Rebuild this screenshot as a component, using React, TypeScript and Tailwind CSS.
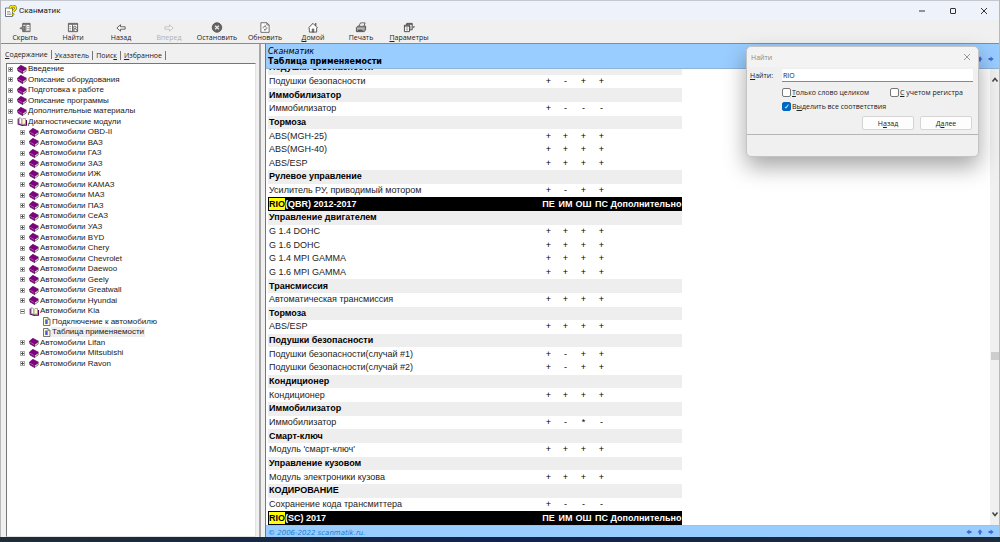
import { useState, type ReactNode } from 'react';

type Tool = { id: string; label: ReactNode; icon: ReactNode; disabled?: boolean };

const tools: Tool[] = [
  {
    id: 'hide',
    label: 'Скрыть',
    icon: (
      <>
        <path d="M4 1.500h8v9H4z" fill="#fff" stroke="#555" />
        <path d="M4 2.500h8M7.500 3v7" stroke="#555" />
        <path d="M9 5h2M9 7h2M9 9h2" stroke="#888" strokeWidth=".8" />
        <path d="M6.500 4.500v5L4.500 9.500V8L.8 7l3.700-2.500z" fill="#888" stroke="#444" strokeWidth=".6" />
      </>
    ),
  },
  {
    id: 'find',
    label: 'Найти',
    icon: (
      <>
        <path d="M1.500 1.500h10v9h-10z" fill="#fff" stroke="#555" />
        <path d="M1.500 2.500h10M6 3v7" stroke="#555" />
        <path d="M2.500 5h2M2.500 7h2M2.500 9h2" stroke="#777" strokeWidth=".8" />
        <circle cx="8.500" cy="6" r="1.500" fill="#ddd" stroke="#444" strokeWidth=".8" />
        <path d="m9.500 7.500 1.500 2M7.500 7.500v2.500" stroke="#444" />
      </>
    ),
  },
  { id: 'back', label: 'Назад', icon: <path d="M2 6.500 6 3V5.200h5v2.600H6V10z" fill="#fff" stroke="#444" strokeWidth=".9" /> },
  {
    id: 'forward',
    label: 'Вперед',
    disabled: true,
    icon: <path d="M11 6.500 7 3V5.200H2v2.600h5V10z" fill="#f4f4f4" stroke="#bbb" strokeWidth=".9" />,
  },
  {
    id: 'stop',
    label: 'Остановить',
    icon: (
      <>
        <circle cx="6.500" cy="6" r="5.200" fill="#666" stroke="#444" strokeWidth=".8" />
        <path d="m4.500 4 4 4m0-4-4 4" stroke="#e8e8e8" strokeWidth="1.500" />
      </>
    ),
  },
  {
    id: 'refresh',
    label: 'Обновить',
    icon: (
      <>
        <path d="M2 .8h6.500l2.500 2.500v8h-9z" fill="#fff" stroke="#555" strokeWidth=".9" />
        <path d="M8.500.8v2.500H11" stroke="#555" strokeWidth=".8" />
        <path d="M4.500 7V5.500L7 4.500M6 3.500l1.500 1L6.500 6M8.500 5.500V7.500L6 8.500M7 7.500l-1.500 1 1.500 1" stroke="#555" strokeWidth=".7" />
      </>
    ),
  },
  {
    id: 'home',
    label: <><u>Д</u>омой</>,
    icon: (
      <>
        <path d="M2.500 6v5h8V5.500" fill="#fff" stroke="#444" strokeWidth=".9" />
        <path d="M1.500 6.500 6.500 1.500l5 5" fill="#fff" stroke="#444" />
        <path d="M9.500 1v3" stroke="#444" strokeWidth="1.200" />
        <path d="M5.500 7.500h2V11h-2z" fill="#777" stroke="#444" strokeWidth=".5" />
      </>
    ),
  },
  {
    id: 'print',
    label: 'Печать',
    icon: (
      <>
        <path d="M4 5 6 1h5L9.500 5" fill="#fff" stroke="#444" strokeWidth=".9" />
        <path d="M1.500 6 3 4.500h8.500v4L10 10.500H1.500z" fill="#999" stroke="#444" strokeWidth=".9" />
        <path d="M2 7.500h7.500M6.500 2.500h3M6 3.800h3" stroke="#ddd" strokeWidth=".8" />
        <path d="M3 9h5" stroke="#333" />
      </>
    ),
  },
  {
    id: 'options',
    label: <><u>П</u>араметры</>,
    icon: (
      <>
        <path d="M4 1.500h6v7H4z" fill="#fff" stroke="#444" />
        <path d="M4 2.500h6" stroke="#444" />
        <path d="M1.500 3.500h5.500v7H1.500z" fill="#fff" stroke="#444" />
        <path d="M1.500 4.500h5.500" stroke="#444" />
        <path d="M3 6.500h2.500M3 8.500h2.500M8.500 4v4" stroke="#666" strokeWidth=".8" />
        <path d="M10.500 5h2.500l-1.250 1.500z" fill="#222" />
      </>
    ),
  },
];

type Node = { name: string; depth: number; kind: 'book' | 'open' | 'page' };

const makes = (names: string[]): Node[] =>
  names.map((n) => ({ name: `Автомобили ${n}`, depth: 1, kind: 'book' }));

const tree: Node[] = [
  { name: 'Введение', depth: 0, kind: 'book' },
  { name: 'Описание оборудования', depth: 0, kind: 'book' },
  { name: 'Подготовка к работе', depth: 0, kind: 'book' },
  { name: 'Описание программы', depth: 0, kind: 'book' },
  { name: 'Дополнительные материалы', depth: 0, kind: 'book' },
  { name: 'Диагностические модули', depth: 0, kind: 'open' },
  ...makes([
    'OBD-II', 'ВАЗ', 'ГАЗ', 'ЗАЗ', 'ИЖ', 'КАМАЗ', 'МАЗ', 'ПАЗ', 'СеАЗ', 'УАЗ', 'BYD',
    'Chery', 'Chevrolet', 'Daewoo', 'Geely', 'Greatwall', 'Hyundai',
  ]),
  { name: 'Автомобили Kia', depth: 1, kind: 'open' },
  { name: 'Подключение к автомобилю', depth: 2, kind: 'page' },
  { name: 'Таблица применяемости', depth: 2, kind: 'page' },
  ...makes(['Lifan', 'Mitsubishi', 'Ravon']),
];

// A row without marks is a section heading; `model` rows carry the column titles.
type Row = { name: string; marks?: string; model?: boolean };

const rows: Row[] = [
  { name: 'Подушки безопасности' },
  { name: 'Подушки безопасности', marks: '+-++' },
  { name: 'Иммобилизатор' },
  { name: 'Иммобилизатор', marks: '+---' },
  { name: 'Тормоза' },
  { name: 'ABS(MGH-25)', marks: '++++' },
  { name: 'ABS(MGH-40)', marks: '++++' },
  { name: 'ABS/ESP', marks: '++++' },
  { name: 'Рулевое управление' },
  { name: 'Усилитель РУ, приводимый мотором', marks: '+-++' },
  { name: '(QBR) 2012-2017', model: true },
  { name: 'Управление двигателем' },
  { name: 'G 1.4 DOHC', marks: '++++' },
  { name: 'G 1.6 DOHC', marks: '++++' },
  { name: 'G 1.4 MPI GAMMA', marks: '++++' },
  { name: 'G 1.6 MPI GAMMA', marks: '++++' },
  { name: 'Трансмиссия' },
  { name: 'Автоматическая трансмиссия', marks: '++++' },
  { name: 'Тормоза' },
  { name: 'ABS/ESP', marks: '++++' },
  { name: 'Подушки безопасности' },
  { name: 'Подушки безопасности(случай #1)', marks: '+-++' },
  { name: 'Подушки безопасности(случай #2)', marks: '+-++' },
  { name: 'Кондиционер' },
  { name: 'Кондиционер', marks: '++++' },
  { name: 'Иммобилизатор' },
  { name: 'Иммобилизатор', marks: '+-*-' },
  { name: 'Смарт-ключ' },
  { name: "Модуль 'смарт-ключ'", marks: '++++' },
  { name: 'Управление кузовом' },
  { name: 'Модуль электроники кузова', marks: '++++' },
  { name: 'КОДИРОВАНИЕ' },
  { name: 'Сохранение кода трансмиттера', marks: '+---' },
  { name: '(SC) 2017', model: true },
];

function TreeIcon({ kind }: { kind: Node['kind'] }) {
  if (kind === 'page') {
    return (
      <svg viewBox="0 0 9 9" className="h-[9px] w-[9px] shrink-0" fill="none">
        <path d="M1.500.5h4.500l2 2v6h-6.500z" fill="#fffbd0" stroke="#555" strokeWidth=".8" />
        <path d="M3.200 2.500h2.500v4.500H3.200z" fill="#4a5fd8" />
        <path d="M6 .5v2h2" stroke="#555" strokeWidth=".6" />
      </svg>
    );
  }
  if (kind === 'open') {
    return (
      <svg viewBox="0 0 10 9" className="h-[9px] w-2.5 shrink-0" fill="none">
        <path d="M1.200 1.500v5.700l3.300.9 1 .5 1-.5h3V3" stroke="#600060" strokeWidth="1.100" />
        <path d="M2.200.8c1.500 0 2.300.7 2.800 1.700v5.500C4.500 7 3.500 6.800 2.200 6.800z" fill="#fff" stroke="#555" strokeWidth=".6" />
        <path d="M5 2.500c.6-1 2-1.200 3.500-1v5.600C7 7 5.600 7.200 5 8z" fill="#fffbc0" stroke="#666" strokeWidth=".6" />
      </svg>
    );
  }
  return (
    <svg viewBox="0 0 10 9" className="h-[9px] w-2.5 shrink-0" fill="none">
      <path d="M5.200 6.600 9.200 4v2L5.500 8.400z" fill="#e8e8e8" stroke="#333" strokeWidth=".6" />
      <path d="M.4 3.200 3.800.3 9.500 3.200 5.500 6.400V8.600L1 6z" fill="#800080" stroke="#500050" strokeWidth=".6" />
      <path d="M1 4.200 5.300 6.600" stroke="#d8a8d8" strokeWidth=".5" />
    </svg>
  );
}

function Expander({ open }: { open: boolean }) {
  return (
    <svg viewBox="0 0 5 5" className="h-[5px] w-[5px] shrink-0" shapeRendering="crispEdges">
      <path d="M0 0h5v5H0z" fill="#aaa" />
      <path d="M1 1h3v3H1z" fill="#fff" />
      <path d={open ? 'M1 2h3v1H1z' : 'M1 2h3v1H1zM2 1h1v3H2z'} fill="#555" />
    </svg>
  );
}

function NavArrow({ label, turn }: { label: string; turn: string }) {
  return (
    <a href="#" aria-label={label}>
      <svg viewBox="0 0 6 6" className={`h-1.5 w-1.5 ${turn}`}>
        <path d="M.5 2h2V.5L5.700 3 2.500 5.500V4h-2z" fill="#4468d4" />
      </svg>
    </a>
  );
}

function NavArrows() {
  return (
    <nav className="flex gap-[5px] pr-[5px]">
      <NavArrow label="Предыдущая" turn="rotate-180" />
      <NavArrow label="Вверх" turn="-rotate-90" />
      <NavArrow label="Следующая" turn="rotate-0" />
    </nav>
  );
}

function TitleBar() {
  return (
    <header className="flex h-5 shrink-0 items-center border-t border-[#c5c8cf] bg-[#eef3fb] pl-1">
      <svg viewBox="0 0 12 12" className="h-3 w-3" fill="none">
        <path d="M.5 3h7v8.500h-7z" fill="#fff" stroke="#555" strokeWidth=".8" />
        <path d="M2 6.500h3M2 8h4M2 9.500h4" stroke="#888" strokeWidth=".7" />
        <path d="M5 3.500C5 1.500 6.500 1 7.800 1c1.600 0 2.700.8 2.700 2.200C10.500 5 8 5 8 7" stroke="#554d00" strokeWidth="2.600" />
        <path d="M5 3.500C5 1.500 6.500 1 7.800 1c1.600 0 2.700.8 2.700 2.200C10.500 5 8 5 8 7" stroke="#ffee00" strokeWidth="1.600" />
        <circle cx="8" cy="9.300" r="1.100" fill="#ffee00" stroke="#554d00" strokeWidth=".5" />
      </svg>
      <h1 className="ml-0.5 flex-1 font-['Roboto',sans-serif] text-[8px] text-[#222]">Сканматик</h1>
      <div className="flex">
        <button aria-label="Свернуть" className="flex w-[31px] justify-center">
          <svg viewBox="0 0 8 8" className="h-2 w-2" stroke="#333"><path d="M1 4h6" /></svg>
        </button>
        <button aria-label="Развернуть" className="flex w-[31px] justify-center">
          <svg viewBox="0 0 8 8" className="h-2 w-2" fill="none" stroke="#333"><rect x="1.500" y="1.500" width="5" height="5" rx=".5" /></svg>
        </button>
        <button aria-label="Закрыть" className="flex w-[31px] justify-center">
          <svg viewBox="0 0 8 8" className="h-2 w-2" stroke="#333"><path d="m1 1 6 6m0-6L1 7" /></svg>
        </button>
      </div>
    </header>
  );
}

function Toolbar() {
  return (
    <div role="toolbar" className="flex h-6 shrink-0 border-b border-[#8c8c8c] pt-0.5">
      {tools.map((t) => (
        <button
          key={t.id}
          disabled={t.disabled}
          className="flex w-12 flex-col items-center text-[7px] leading-[9px] text-[#222] disabled:text-[#b0b0b0]"
        >
          <svg viewBox="0 0 13 12" className="h-[11px] w-3" fill="none">{t.icon}</svg>
          <span>{t.label}</span>
        </button>
      ))}
    </div>
  );
}

function Contents() {
  return (
    <aside className="flex w-[260px] shrink-0 flex-col border-r-2 border-[#a8a8a8] pt-[3px] pr-[3px] pl-[5px]">
      <div role="tablist" className="-ml-px flex h-4 items-center text-[7px] leading-[9px] text-[#222]">
        <button role="tab" aria-selected="true" className="-mt-0.5 border-r border-[#777] pr-[3px]"><u>С</u>одержание</button>
        <button role="tab" className="border-r border-[#777] px-[3px]"><u>У</u>казатель</button>
        <button role="tab" className="border-r border-[#777] px-[3px]">Поис<u>к</u></button>
        <button role="tab" className="border-r border-[#777] px-[3px]"><u>И</u>збранное</button>
      </div>
      <div className="flex-1 border border-t-[#777] border-r-[#e3e3e3] border-b-[#e3e3e3] border-l-[#777] bg-white">
        <ul
          role="tree"
          className="grid h-[305px] auto-rows-fr font-['Liberation_Sans',Arial,sans-serif] text-[8px] leading-[10px] text-[#1a1a1a]"
        >
          {tree.map((n) => (
            <li
              key={n.name}
              role="treeitem"
              className={`flex items-center ${n.depth === 0 ? 'pl-px' : n.depth === 1 ? 'pl-[13px]' : 'pl-[35px]'}`}
            >
              {n.kind !== 'page' && <Expander open={n.kind === 'open'} />}
              <span className={n.kind === 'page' ? '' : 'mr-1'} />
              <TreeIcon kind={n.kind} />
              <span className={`px-px ${n.name === 'Таблица применяемости' ? 'bg-[#eeeeee]' : ''}`}>
                {n.name}
              </span>
            </li>
          ))}
        </ul>
      </div>
    </aside>
  );
}

function Applicability() {
  return (
    <table className="-mt-2 ml-0.5 h-[calc(100%+8px)] w-[414px] table-fixed border-collapse font-['Liberation_Sans',Arial,sans-serif] text-[9px] leading-[13px] text-[#222]">
      <colgroup>
        <col />
        <col className="w-[17px]" />
        <col className="w-[17px]" />
        <col className="w-[19px]" />
        <col className="w-[17px]" />
        <col className="w-[72px]" />
      </colgroup>
      <tbody>
        {rows.map((r, i) => {
          if (r.model) {
            return (
              <tr key={i} className="bg-black text-center text-white">
                <th className="p-0 pl-px text-left">
                  <mark className="bg-[#ffff00] py-px text-black">RIO</mark>
                  {r.name}
                </th>
                <th className="p-0">ПЕ</th>
                <th className="p-0">ИМ</th>
                <th className="p-0">ОШ</th>
                <th className="p-0">ПС</th>
                <th className="p-0">Дополнительно</th>
              </tr>
            );
          }
          if (!r.marks) {
            return (
              <tr key={i} className="bg-[#eeeeee] text-black">
                <th colSpan={6} className="p-0 pl-px text-left">{r.name}</th>
              </tr>
            );
          }
          return (
            <tr key={i}>
              <td className="p-0 pl-px">{r.name}</td>
              {r.marks.split('').map((m, k) => (
                <td key={k} className="p-0 text-center text-black">{m}</td>
              ))}
              <td className="p-0" />
            </tr>
          );
        })}
      </tbody>
    </table>
  );
}

function Topic() {
  return (
    <main className="ml-1 flex min-w-0 flex-1 flex-col border-l border-[#777] bg-white">
      <div className="flex h-[25px] shrink-0 items-center justify-between border-b border-[#8fb4d8] bg-[#99ccff] pl-0.5 font-['DejaVu_Sans',Verdana,sans-serif]">
        <div className="pt-px text-[8px] leading-[10px] text-black">
          <p className="italic">Сканматик</p>
          <h2 className="font-bold">Таблица применяемости</h2>
        </div>
        <div className="pt-1.5">
          <NavArrows />
        </div>
      </div>
      <div className="flex min-h-0 flex-1">
        <div className="min-w-0 flex-1 overflow-hidden">
          <Applicability />
        </div>
        <div className="flex w-[9px] flex-col items-center bg-[#f0f0f0] py-2">
          <svg viewBox="0 0 8 6" className="h-1.5 w-2" fill="none" stroke="#444" strokeWidth="1.500"><path d="m1.500 4.500 2.500-3 2.500 3" /></svg>
          <div className="grow-[270]" />
          <div className="h-2 w-2 bg-[#cdcdcd]" />
          <div className="grow-[152]" />
          <svg viewBox="0 0 8 6" className="h-1.5 w-2" fill="none" stroke="#444" strokeWidth="1.500"><path d="m1.500 1.500 2.500 3 2.500-3" /></svg>
        </div>
      </div>
      <footer className="flex h-3 shrink-0 items-end justify-between border-t border-[#bbb] bg-[#99ccff] pl-0.5 font-['DejaVu_Sans',Verdana,sans-serif]">
        <p className="text-[7px] leading-[8px] text-[#1a80d0] italic">© 2006-2022 scanmatik.ru.</p>
        <div className="pb-0.5">
          <NavArrows />
        </div>
      </footer>
    </main>
  );
}

function FindDialog() {
  const [query, setQuery] = useState('RIO');
  const [whole, setWhole] = useState(false);
  const [matchCase, setMatchCase] = useState(false);
  const [highlight, setHighlight] = useState(true);
  const box =
    "flex h-[9px] w-[9px] appearance-none items-center justify-center rounded-[2px] border border-[#777] bg-white text-[7px] leading-[7px] text-white checked:border-[#0067c0] checked:bg-[#0067c0] checked:after:content-['✓']";

  return (
    <div
      role="dialog"
      aria-label="Найти"
      className="absolute top-[46px] right-[21px] flex h-[111px] w-[233px] flex-col rounded-[5px] border border-[#c4c4c4] bg-[#f0f0f0] text-[7px] leading-[9px] text-[#222] shadow-[0_10px_22px_rgba(0,0,0,0.35)]"
    >
      <div className="flex h-5 items-center justify-between rounded-t-[5px] bg-[#f3f3f3] pr-[7px] pl-1 text-[#888]">
        Найти
        <button aria-label="Закрыть">
          <svg viewBox="0 0 8 8" className="h-2 w-2" stroke="#999"><path d="m1 1 6 6m0-6L1 7" /></svg>
        </button>
      </div>
      <form className="flex flex-1 flex-col" onSubmit={(e) => e.preventDefault()}>
        <div className="flex items-center pt-0.5 pr-[5px] pl-[3px]">
          <label htmlFor="query" className="w-8"><u>Н</u>айти:</label>
          <input
            id="query"
            value={query}
            onChange={(e) => setQuery(e.target.value)}
            className="h-[13px] min-w-0 flex-1 border-b border-[#888] bg-white px-px outline-none"
          />
        </div>
        <div className="flex flex-col gap-[5px] pt-1.5 pl-[35px]">
          <div className="flex">
            <label className="flex w-[108px] items-center gap-px whitespace-nowrap">
              <input type="checkbox" className={box} checked={whole} onChange={(e) => setWhole(e.target.checked)} />
              <span><u>Т</u>олько слово целиком</span>
            </label>
            <label className="flex items-center gap-px whitespace-nowrap">
              <input type="checkbox" className={box} checked={matchCase} onChange={(e) => setMatchCase(e.target.checked)} />
              <span><u>С</u> учетом регистра</span>
            </label>
          </div>
          <label className="flex items-center gap-px">
            <input type="checkbox" className={box} checked={highlight} onChange={(e) => setHighlight(e.target.checked)} />
            <span>В<u>ы</u>делить все соответствия</span>
          </label>
        </div>
        <div className="flex justify-end gap-1.5 pt-[5px] pr-1.5">
          <button type="button" className="h-3.5 w-[52px] rounded-[2px] border border-[#d5d5d5] bg-[#fdfdfd]">Н<u>а</u>зад</button>
          <button type="submit" className="h-3.5 w-[52px] rounded-[2px] border border-[#d5d5d5] bg-[#fdfdfd]">Д<u>а</u>лее</button>
        </div>
        <div className="mt-1 border-t border-[#b5b5b5]" />
      </form>
    </div>
  );
}

export default function App() {
  return (
    <div className="relative flex h-screen flex-col overflow-hidden bg-[#f0f0f0] font-['Open_Sans','Noto_Sans',sans-serif]">
      <div className="flex min-h-0 flex-1 flex-col border-x border-[#b8b8b8]">
        <TitleBar />
        <Toolbar />
        <div className="flex min-h-0 flex-1">
          <Contents />
          <Topic />
        </div>
      </div>
      <div className="h-[5px] shrink-0 bg-linear-to-r from-[#1f2d38] via-[#10234c] to-[#1c2c3a]" />
      <FindDialog />
    </div>
  );
}
